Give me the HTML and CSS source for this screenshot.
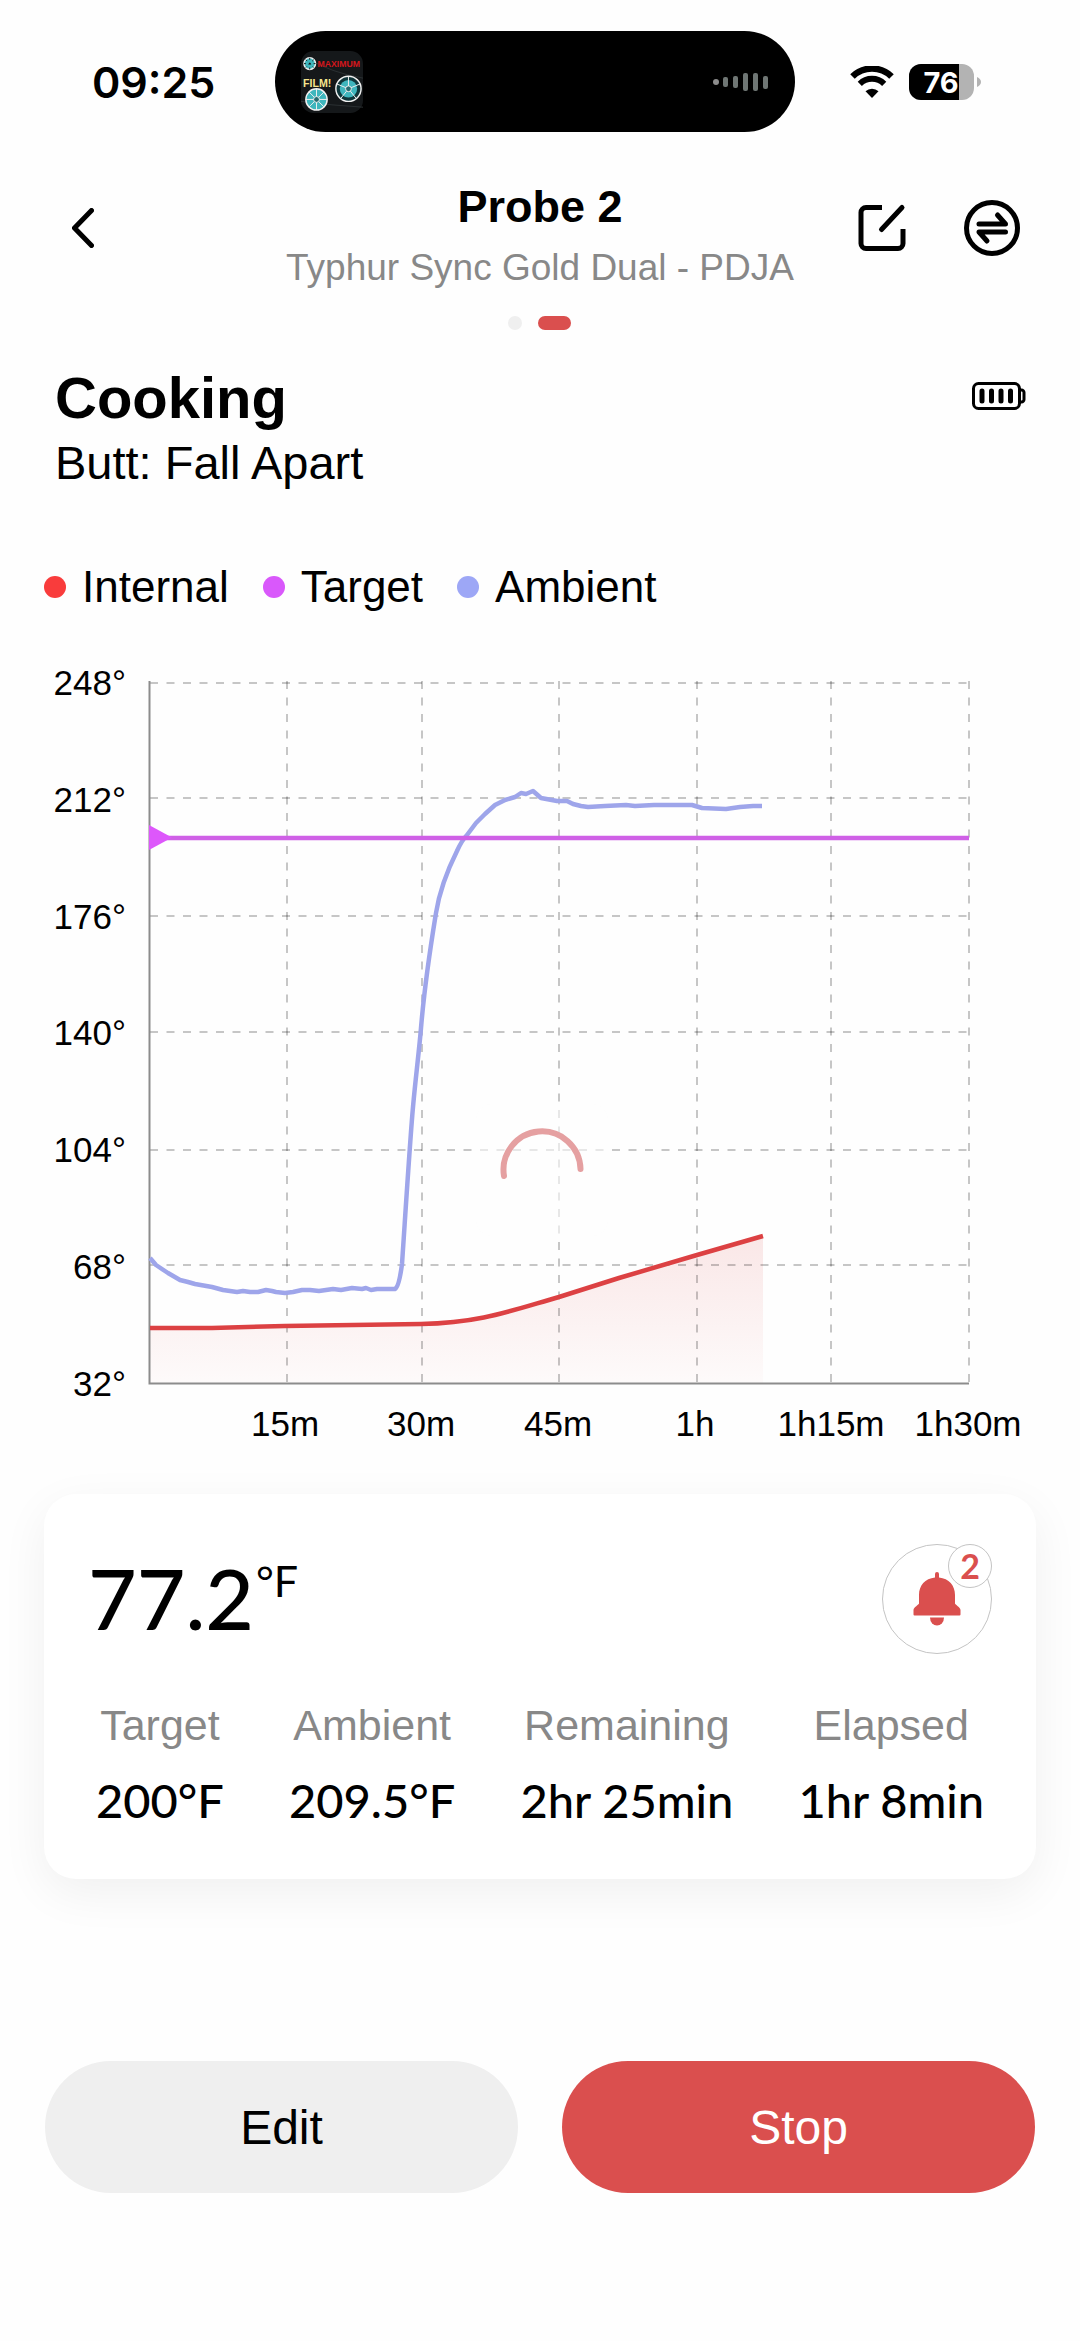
FILE: index.html
```
<!DOCTYPE html>
<html lang="en">
<head>
    <meta charset="UTF-8">
    <meta name="viewport" content="width=device-width, initial-scale=1.0">
    <title>Probe 2</title>
    <link rel="stylesheet" href="styles.css">
</head>
<body>
    <div class="status-bar">
        <span class="status-time">09:25</span>
        <div class="island">
            <svg class="island-art" viewBox="0 0 64 64" aria-hidden="true">
                <rect width="64" height="64" rx="13" fill="#15181a"/>
                <path d="M0 52 Q30 56 64 58 M8 8 Q30 22 64 28" stroke="#2b3133" fill="none"/>
                <text class="art-top" x="17" y="16">MAXIMUM</text>
                <text class="art-bottom" x="2" y="37">FILM!</text>
                <g fill="#3fb6bd" stroke="#f0f0f0">
                    <circle cx="9" cy="13" r="6" stroke-width="1.5"/>
                    <circle cx="16" cy="50" r="11" stroke-width="1.5"/>
                    <circle cx="49" cy="39" r="13" stroke-width="1.5" fill="#10363a"/>
                    <circle cx="49" cy="39" r="9" stroke="none"/>
                    <path d="M9 7v12M3 13h12M5 9l8 8M13 9l-8 8" stroke="#15181a" stroke-dasharray="2 3"/>
                    <path d="M16 39v22M5 50h22M8 42l16 16M24 42l-16 16"/>
                    <path d="M49 39v-13M49 39l12-5M49 39l8 10M49 39l-8 10M49 39l-12-5"/>
                    <circle cx="16" cy="50" r="3" fill="#256b70"/>
                    <circle cx="49" cy="39" r="3" fill="#256b70"/>
                </g>
            </svg>
            <svg class="island-wave" viewBox="0 0 56 20" aria-hidden="true">
                <g fill="#6f7674">
                    <circle cx="3" cy="10" r="3" fill="#8d8d8d"/>
                    <rect x="10" y="5" width="5" height="10" rx="2"/>
                    <rect x="20" y="4" width="5" height="12" rx="2"/>
                    <rect x="30" y="1" width="5" height="18" rx="2"/>
                    <rect x="40" y="1" width="5" height="18" rx="2"/>
                    <rect x="50" y="4" width="5" height="13" rx="2"/>
                </g>
            </svg>
        </div>
        <div class="status-icons">
            <svg class="wifi" viewBox="0 0 44 32" aria-hidden="true">
                <path d="M2.5 10.5A28 28 0 0 1 41.5 10.5" fill="none" stroke="#000" stroke-width="6.5"/>
                <path d="M9.8 17.8A17.5 17.5 0 0 1 34.2 17.8" fill="none" stroke="#000" stroke-width="6"/>
                <path d="M22 32l-6.5-6.7a9.5 9.5 0 0 1 13 0z"/>
            </svg>
            <svg class="charge" viewBox="0 0 72 36" role="img" aria-label="Battery 76%">
                <clipPath id="chargeShape"><rect width="65" height="36" rx="12"/></clipPath>
                <g clip-path="url(#chargeShape)">
                    <rect width="65" height="36" fill="#b3b3b3"/>
                    <rect width="50" height="36"/>
                </g>
                <path d="M68 13q4 2 4 5t-4 5z" fill="#b3b3b3"/>
                <text x="32" y="29" text-anchor="middle">76</text>
            </svg>
        </div>
    </div>

    <header class="header">
        <button class="icon-btn" type="button" aria-label="Back">
            <svg class="back-icon" viewBox="0 0 22 40" aria-hidden="true">
                <path d="M19.5 2.5L2.5 20l17 17.5"/>
            </svg>
        </button>
        <div class="header-title">
            <h1>Probe 2</h1>
            <p>Typhur Sync Gold Dual - PDJA</p>
            <div class="pager">
                <span class="pager-dot"></span>
                <span class="pager-dot active"></span>
            </div>
        </div>
        <div class="header-actions">
            <button class="icon-btn" type="button" aria-label="Rename">
                <svg class="action-icon" viewBox="0 0 56 56" aria-hidden="true">
                    <path stroke-linecap="butt" d="M28 7.5H12a5 5 0 0 0-5 5V43.5a5 5 0 0 0 5 5H44a5 5 0 0 0 5-5V29"/>
                    <path d="M48 7.500L27.500 29.500"/>
                </svg>
            </button>
            <button class="icon-btn" type="button" aria-label="Switch probe">
                <svg class="action-icon" viewBox="0 0 56 56" aria-hidden="true">
                    <circle cx="28" cy="28" r="25.5"/>
                    <path d="M15 24H41.5L33.5 15M41.5 32H15L23 41"/>
                </svg>
            </button>
        </div>
    </header>

    <main>
        <section class="cook">
            <div>
                <h2>Cooking</h2>
                <p>Butt: Fall Apart</p>
            </div>
            <svg class="probe-battery" viewBox="0 0 54 28" role="img" aria-label="Probe battery full">
                <rect x="1.5" y="1.5" width="46" height="25" rx="5"/>
                <path d="M47.5 8h2a2.5 2.5 0 0 1 2.5 2.5v7a2.5 2.5 0 0 1-2.5 2.5h-2"/>
                <path class="cells" d="M10 9v10M19.500 9v10M29 9v10M38.500 9v10"/>
            </svg>
        </section>

        <ul class="legend">
            <li><span class="dot dot-internal"></span>Internal</li>
            <li><span class="dot dot-target"></span>Target</li>
            <li><span class="dot dot-ambient"></span>Ambient</li>
        </ul>

        <svg class="chart" viewBox="0 0 1080 816" role="img" aria-label="Temperature over time">
            <defs>
                <linearGradient id="internalFill" x1="0" y1="0" x2="0" y2="1">
                    <stop offset="0" stop-color="#dc4b4b" stop-opacity="0.13"/>
                    <stop offset="1" stop-color="#dc4b4b" stop-opacity="0.02"/>
                </linearGradient>
            </defs>

            <path fill="url(#internalFill)" d="M150 688L212 688L285 686L421 684C480 683 510 671 559 657L619 638L697 615L763 596V743H150Z"/>

            <g class="grid">
                <path d="M150 43H969M150 158H969M150 276H969M150 392H969M150 510H969M150 625H969"/>
                <path d="M287 41V743M422 41V743M559 41V743M697 41V743M831 41V743M969 41V743"/>
            </g>
            <path class="axis" d="M149.5 41V743.5H969"/>

            <path class="line line-internal" d="M150 688L212 688L285 686L421 684C480 683 510 671 559 657L619 638L697 615L763 596"/>
            <path class="line line-ambient" d="M150 618L156 625L168 633L180 640L188 642L195 644L212 647L223 650L237 652L243 651L250 652L258 652L266 650L272 651L276 652L285 653L293 652L302 650L310 650L319 651L333 649L341 650L352 648L362 649L366 648L371 650L377 649L395 649Q399 647 402 624C405 580 410 500 413 467S419 412 421 388C425 340 430 310 436 273C440 248 449 227 457 211Q462 200 467 195L476 183L485 174L495 165L505 160L515 157L521 153L526 154L533 151L541 158L557 161L567 161L573 164L581 166L588 167L605 166L626 165L635 166L654 165L692 165L702 168L726 169L740 167L753 166L762 166"/>
            <path class="line line-target" d="M150 198H969"/>
            <path class="target-mark" d="M149 185L172 197.5L149 210Z"/>

            <rect x="476" y="464" width="132" height="132" rx="16" fill="#fefefe" fill-opacity="0.6"/>
            <path class="spinner" d="M504 536A38.500 38.500 0 1 1 580.500 529"/>

            <g class="y-labels">
                <text x="126" y="55">248°</text>
                <text x="126" y="172">212°</text>
                <text x="126" y="289">176°</text>
                <text x="126" y="405">140°</text>
                <text x="126" y="522">104°</text>
                <text x="126" y="639">68°</text>
                <text x="126" y="756">32°</text>
            </g>
            <g class="x-labels">
                <text x="285" y="796">15m</text>
                <text x="421" y="796">30m</text>
                <text x="558" y="796">45m</text>
                <text x="695" y="796">1h</text>
                <text x="831" y="796">1h15m</text>
                <text x="968" y="796">1h30m</text>
            </g>
        </svg>

        <section class="card">
            <div class="card-top">
                <p class="reading">77.2<span class="reading-unit">°F</span></p>
                <button class="alarm" type="button" aria-label="Alarms, 2 set">
                    <svg class="bell" viewBox="0 0 48 54" aria-hidden="true">
                        <path d="M24 0a2 2 0 0 1 2 2v3.500C36 6.500 42 13.500 42 23v8.500c0 1 5.500 4 5.500 6.500V42.500a1 1 0 0 1-1 1h-45a1 1 0 0 1-1-1V38c0-2.500 5.500-5.500 5.500-6.500V23C6 13.500 12 6.500 22 5.500V2a2 2 0 0 1 2-2z"/>
                        <path d="M17 45.500h14a7 8 0 0 1-14 0z"/>
                    </svg>
                    <span class="alarm-badge">2</span>
                </button>
            </div>
            <dl class="stats">
                <div><dt>Target</dt><dd>200°F</dd></div>
                <div><dt>Ambient</dt><dd>209.5°F</dd></div>
                <div><dt>Remaining</dt><dd>2hr 25min</dd></div>
                <div><dt>Elapsed</dt><dd>1hr 8min</dd></div>
            </dl>
        </section>
    </main>

    <footer class="actions">
        <button class="btn btn-edit" type="button">Edit</button>
        <button class="btn btn-stop" type="button">Stop</button>
    </footer>
</body>
</html>
```
FILE: styles.css
```
* {
    box-sizing: border-box;
}

body {
    margin: 0;
    background: #fefefe;
    color: #000;
    font-family: "Liberation Sans", Arial, sans-serif;
}

h1, h2, p, ul, dl, dd {
    margin: 0;
    padding: 0;
}

button {
    border: 0;
    padding: 0;
    background: none;
    color: inherit;
    font: inherit;
    cursor: pointer;
}

svg {
    display: block;
}

/* Status bar */
.status-bar {
    display: grid;
    grid-template-columns: 1fr 520px 1fr;
    align-items: center;
    padding: 31px 10px 0 0;
}

.status-time {
    padding-left: 92px;
    font-family: Inter, sans-serif;
    font-size: 43px;
    font-weight: 600;
    line-height: 52px;
}

.island {
    display: flex;
    align-items: center;
    justify-content: space-between;
    height: 101px;
    padding: 0 26px;
    border-radius: 51px;
    background: #000;
}

.island-art {
    width: 62px;
}

.art-top,
.art-bottom {
    font-size: 9px;
    font-weight: 700;
    fill: #d3161c;
}

.art-bottom {
    font-size: 11px;
    fill: #f6e58d;
}

.island-wave {
    width: 56px;
}

.status-icons {
    display: flex;
    align-items: center;
    gap: 15px;
    padding-left: 55px;
}

.wifi {
    width: 44px;
}

.charge {
    width: 72px;
}

.charge text {
    font-family: Inter, sans-serif;
    font-size: 29px;
    font-weight: 700;
    fill: #fff;
}

/* Header */
.header {
    display: grid;
    grid-template-columns: 1fr auto 1fr;
    align-items: start;
    padding: 48px 60px 0;
}

.icon-btn {
    display: flex;
    align-items: center;
    justify-content: center;
    height: 96px;
    padding-left: 12px;
    justify-self: start;
}

.icon-btn svg {
    fill: none;
    stroke: #000;
    stroke-width: 5;
    stroke-linecap: round;
    stroke-linejoin: round;
}

.back-icon {
    width: 22px;
}

.action-icon {
    width: 56px;
}

.header-title {
    text-align: center;
}

.header-title h1 {
    font-size: 45px;
    line-height: 54px;
}

.header-title p {
    margin-top: 12px;
    color: #888;
    font-size: 37px;
    line-height: 44px;
}

.pager {
    display: flex;
    justify-content: center;
    gap: 16px;
    margin-top: 26px;
}

.pager-dot {
    width: 14px;
    height: 14px;
    border-radius: 7px;
    background: #efefef;
}

.pager-dot.active {
    width: 33px;
    background: #da4f4e;
}

.header-actions {
    display: flex;
    justify-content: flex-end;
    gap: 42px;
}

/* Cook info */
.cook {
    display: flex;
    justify-content: space-between;
    padding: 34px 54px 0 55px;
}

.cook h2 {
    font-size: 58px;
    line-height: 68px;
}

.cook p {
    margin-top: 4px;
    font-size: 47px;
    line-height: 54px;
}

.probe-battery {
    width: 54px;
    height: 28px;
    margin-top: 18px;
    fill: none;
    stroke: #000;
    stroke-width: 3;
}

.probe-battery .cells {
    stroke-width: 5;
    stroke-linecap: round;
}

.legend {
    display: flex;
    gap: 34px;
    padding: 72px 44px 0;
    list-style: none;
    font-size: 44px;
    line-height: 50px;
}

.legend li {
    display: flex;
    align-items: center;
    gap: 16px;
}

.dot {
    width: 22px;
    height: 22px;
    border-radius: 50%;
}

.dot-internal {
    background: #f93c3c;
}

.dot-target {
    background: #d958fb;
}

.dot-ambient {
    background: #9da7f6;
}

/* Chart */
.chart {
    width: 100%;
    margin-top: 28px;
    font-size: 35px;
}

.grid {
    fill: none;
    stroke: #000;
    stroke-opacity: 0.22;
    stroke-width: 2;
    stroke-dasharray: 8 8.5;
}

.axis {
    fill: none;
    stroke: #8c8c8c;
    stroke-width: 2;
}

.line {
    fill: none;
    stroke-width: 4.5;
    stroke-linejoin: round;
}

.line-internal {
    stroke: #dc4143;
}

.line-ambient {
    stroke: #9ea5ea;
}

.line-target {
    stroke: #cf60e6;
}

.target-mark {
    fill: #dd57fb;
}

.spinner {
    fill: none;
    stroke: #e5a0a1;
    stroke-width: 6;
    stroke-linecap: round;
}

.y-labels {
    text-anchor: end;
}

.x-labels {
    text-anchor: middle;
}

/* Reading card */
.card {
    margin: 38px 44px 0;
    padding: 50px 44px 50px;
    border-radius: 32px;
    background: #fff;
    box-shadow: 0 14px 48px rgba(0, 0, 0, 0.06);
}

.card-top {
    display: flex;
    justify-content: space-between;
}

.reading {
    display: flex;
    align-items: flex-start;
    gap: 2px;
    font-family: Lato, sans-serif;
    font-size: 84px;
    font-weight: 500;
    line-height: 108px;
}

.reading-unit {
    font-size: 43px;
    font-weight: 400;
    line-height: 74px;
}

.alarm {
    position: relative;
    display: flex;
    align-items: center;
    justify-content: center;
    width: 110px;
    height: 110px;
    border: 1px solid #c4c4c4;
    border-radius: 50%;
}

.bell {
    width: 48px;
    fill: #da4f4e;
}

/* sits on the rim of the alarm button */
.alarm-badge {
    position: absolute;
    top: -1px;
    right: -1px;
    width: 44px;
    height: 44px;
    border: 1px solid #c4c4c4;
    border-radius: 50%;
    background: #fff;
    color: #da4f4e;
    font-family: Lato, sans-serif;
    font-size: 34px;
    font-weight: 700;
    line-height: 42px;
}

.stats {
    display: flex;
    justify-content: space-between;
    margin-top: 46px;
    padding: 0 8px;
    text-align: center;
}

.stats dt {
    color: #888;
    font-size: 43px;
    line-height: 50px;
}

.stats dd {
    margin-top: 21px;
    font-family: Lato, sans-serif;
    font-size: 47px;
    font-weight: 500;
    line-height: 58px;
}

/* Bottom buttons */
.actions {
    display: grid;
    grid-template-columns: 1fr 1fr;
    gap: 44px;
    padding: 182px 45px 148px;
}

.btn {
    height: 132px;
    border-radius: 66px;
    font-size: 48px;
}

.btn-edit {
    background: #efefef;
}

.btn-stop {
    background: #da4f4e;
    color: #fff;
}
```
